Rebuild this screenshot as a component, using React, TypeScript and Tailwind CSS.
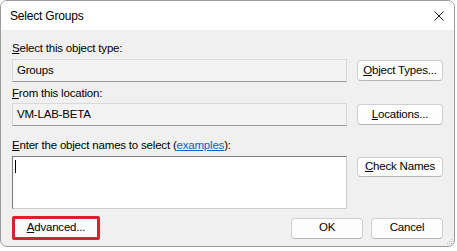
import React from 'react';

const font = { fontFamily: '"Segoe UI", "Liberation Sans", Arial, sans-serif' };

function Btn({ children, className = '' }: { children: React.ReactNode; className?: string }) {
  return (
    <div
      className={`flex items-center justify-center rounded-[4px] border border-[#d0d0d0] border-b-[#b5b5b5] bg-[#fdfdfd] text-[11.5px] tracking-[-0.2px] text-black ${className}`}
    >
      {children}
    </div>
  );
}

function ReadBox({ value }: { value: string }) {
  return (
    <div className="flex h-[23px] w-[335px] items-center border border-[#d9d9d9] border-b-[#9a9a9a] bg-[#f3f3f3] pl-[4px] text-[11.5px] tracking-[-0.2px] text-black">
      {value}
    </div>
  );
}

export default function App() {
  return (
    <div className="h-[251px] w-[457px] bg-white" style={font}>
      <div className="flex h-[247px] w-[455px] flex-col overflow-hidden rounded-[7px] border border-[#9a9a9a] bg-[#f0f0f0]">
        {/* title bar */}
        <div className="flex h-[29px] shrink-0 items-center justify-between bg-white pl-[9px] pr-[9px]">
          <span className="text-[12px] tracking-[-0.2px] text-black">Select Groups</span>
          <svg width="10" height="10" viewBox="0 0 10 10" className="mr-[1px]">
            <path d="M0.5 0.5 L9.5 9.5 M9.5 0.5 L0.5 9.5" stroke="#1a1a1a" strokeWidth="1" />
          </svg>
        </div>

        <div className="relative flex flex-1 flex-col px-[11px] pt-[10px] text-[11.5px] tracking-[-0.2px]">
          <div className="h-[16px] leading-[16px] text-black">
            <span className="underline">S</span>elect this object type:
          </div>
          <div className="mt-[3px] flex items-center gap-[10px]">
            <ReadBox value="Groups" />
            <Btn className="h-[21px] w-[86px]">
              <span className="underline">O</span>bject Types...
            </Btn>
          </div>

          <div className="mt-[3px] h-[16px] leading-[16px] text-black">
            <span className="underline">F</span>rom this location:
          </div>
          <div className="mt-[2px] flex items-center gap-[10px]">
            <ReadBox value="VM-LAB-BETA" />
            <Btn className="h-[21px] w-[86px]">
              <span className="underline">L</span>ocations...
            </Btn>
          </div>

          <div className="mt-[11px] h-[16px] leading-[16px] text-black">
            <span className="underline">E</span>nter the object names to select (
            <span className="text-[#0066cc] underline">examples</span>):
          </div>
          <div className="mt-[3px] flex items-start gap-[10px]">
            <div className="h-[53px] w-[335px] border border-[#cfcfcf] border-l-[#7a7a7a] border-t-[#7a7a7a] bg-white pl-[2px] pt-[3px]">
              <div className="h-[13px] w-px bg-black" />
            </div>
            <Btn className="mt-[1px] h-[20px] w-[86px]">
              <span className="underline">C</span>heck Names
            </Btn>
          </div>

          <div className="mt-[7px] flex items-center">
            <div className="flex h-[24px] w-[88px] items-center justify-center rounded-[2px] border-[3px] border-[#d8202e] bg-[#fbfbfb] text-black">
              <span className="underline">A</span>dvanced...
            </div>
            <div className="ml-auto flex gap-[8px]">
              <Btn className="h-[21px] w-[72px]">OK</Btn>
              <Btn className="h-[21px] w-[72px]">Cancel</Btn>
            </div>
          </div>

          {/* resize grip */}
          <svg width="6" height="6" viewBox="0 0 6 6" className="absolute bottom-[1px] right-[1px]">
            <rect x="4" y="0" width="1" height="1" fill="#b0b0b0" />
            <rect x="2" y="2" width="1" height="1" fill="#b0b0b0" />
            <rect x="4" y="2" width="1" height="1" fill="#b0b0b0" />
            <rect x="0" y="4" width="1" height="1" fill="#b0b0b0" />
            <rect x="2" y="4" width="1" height="1" fill="#b0b0b0" />
            <rect x="4" y="4" width="1" height="1" fill="#b0b0b0" />
          </svg>
        </div>
      </div>
    </div>
  );
}
